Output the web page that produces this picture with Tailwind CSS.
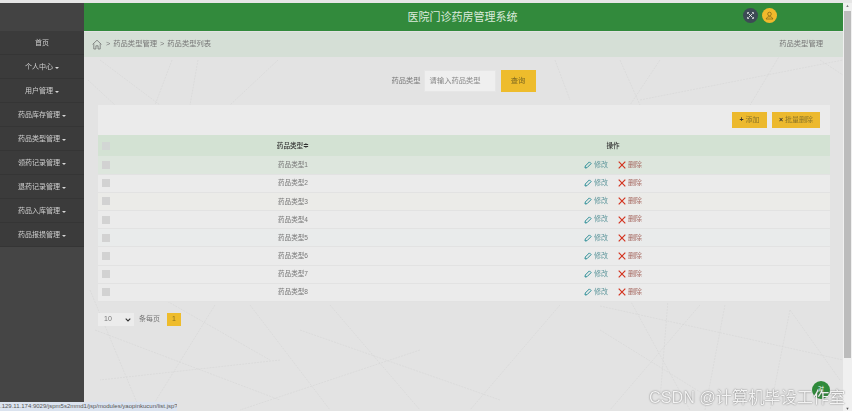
<!DOCTYPE html>
<html lang="zh-CN">
<head>
  <meta charset="UTF-8">
  <title>医院门诊药房管理系统</title>
  <script src="https://cdn.jsdelivr.net/npm/@tailwindcss/browser@4"></script>
</head>
<body class="w-[852px] h-[413px] overflow-hidden bg-white font-['Liberation_Sans','Noto_Sans_CJK_SC',sans-serif]">
  <div class="relative w-[852px] h-[413px] blur-[0.4px]">
    <div class="h-[3px] bg-[#e6e6e6]"></div>
    <div class="flex h-[408px]">
      <!-- sidebar -->
      <aside class="w-[84px] shrink-0 bg-[#454545] flex flex-col">
        <div class="h-[28px] bg-[#434343]"></div>
        <nav id="menu" class="bg-[#3b3b3b] text-[7px] text-[#cfcfcf]"></nav>
      </aside>

      <div class="flex-1 flex flex-col relative bg-[#e3e3e3]">
        <!-- background lines, in page coordinates -->
        <svg class="absolute left-0 top-0" width="759" height="408" viewBox="84 3 759 408" fill="none" stroke="#d2d2d2" stroke-width="0.5" stroke-dasharray="2 1">
          <path d="M100 60 160 105M172 60 155 105M198 60 190 105M278 60 230 105M88 80 115 105M555 60 570 100M620 60 640 105M660 60 630 105M780 55 750 105M640 100 843 60M820 60 843 75"/>
          <path d="M90 290 140 410M165 300 270 360M215 305 150 410M95 330 280 400M280 360 100 380M250 305 330 410M330 305 420 410M420 350 240 410M300 330 500 400M560 305 470 410"/>
          <path d="M600 306 843 360M630 300 690 410M600 330 705 395M700 305 610 410M668 300 660 400M725 305 705 410M790 310 770 410M790 310 840 380"/>
        </svg>

        <header class="relative h-[28px] bg-[#328a3c] flex items-center justify-center pr-[2px]">
          <h1 class="text-[11px] text-[#dcebdc]">医院门诊药房管理系统</h1>
          <div class="absolute left-[659px] top-[5px] w-[15px] h-[15px] rounded-full bg-[#3d4a55] flex items-center justify-center">
            <svg width="7" height="7" viewBox="0 0 7 7" fill="none" stroke="#fff" stroke-width="0.8"><path d="M1.5 1.5 5.5 5.5M5.5 1.5 1.5 5.5"/><path d="M.5 2V.5H2M5 .5H6.5V2M6.5 5V6.5H5M2 6.5H.5V5" stroke-width="0.7"/></svg>
          </div>
          <div class="absolute left-[678px] top-[5px] w-[15px] h-[15px] rounded-full bg-[#f0b92c] flex items-center justify-center">
            <svg width="9" height="9" viewBox="0 0 9 9" fill="none" stroke="#7a6015" stroke-width="0.7"><circle cx="4.5" cy="3" r="1.8"/><path d="M1 8h7L6.2 5.8H2.8Z"/></svg>
          </div>
        </header>

        <div class="relative h-[25px] mt-[1px] bg-[#d5dfd6] flex items-center justify-between pl-[8px] pr-[20px] text-[7.3px] text-[#777]">
          <div class="flex items-center gap-[3px]">
            <svg width="10" height="11" viewBox="0 0 10 11" fill="none" stroke="#666" stroke-width="0.7"><path d="M.6 5.4 5 1.2 9.4 5.4M1.8 4.6V10H3.9V6.8H6.1V10H8.2V4.6"/></svg>
            <span class="ml-[1px]">&gt;</span><span>药品类型管理</span><span>&gt;</span><span>药品类型列表</span>
          </div>
          <span>药品类型管理</span>
        </div>

        <main class="relative flex-1 pl-[14px] pr-[13px]">
          <form class="flex items-center justify-center h-[22px] mt-[13px] text-[7.3px] text-[#777] pr-[1px]">
            <label class="mr-[3px]">药品类型</label>
            <div class="w-[72px] h-[22px] bg-[#efefef] border border-[#e6e6e6] flex items-center pl-[5px] text-[#888]">请输入药品类型</div>
            <button type="button" class="ml-[5px] w-[35px] h-[22px] bg-[#eebc2c] text-[#7d6820]">查询</button>
          </form>

          <section class="mt-[13px] bg-[#ebebeb]">
            <div class="h-[30px] flex items-center justify-end gap-[5px] pr-[10px] text-[7px]">
              <button type="button" class="w-[35px] h-[16px] bg-[#ecb92e] text-[#8a7428]"><b class="text-[#333]">+</b> 添加</button>
              <button type="button" class="w-[48px] h-[16px] bg-[#ecb92e] text-[#8a7428]"><b class="text-[#333]">×</b> 批量删除</button>
            </div>
            <table class="w-full text-[6.6px] text-[#777] border-collapse table-fixed">
              <thead>
                <tr class="h-[21px] bg-[#d3e2d3] text-[#333]">
                  <th class="w-[92px] pl-[4px]"><span class="block w-[8px] h-[8px] bg-[#d2d6d4]"></span></th>
                  <th class="w-[206px] text-center font-medium">药品类型≑</th>
                  <th class="font-medium text-center">操作</th>
                </tr>
              </thead>
              <tbody id="rows"></tbody>
            </table>
          </section>

          <div class="flex items-center h-[15px] mt-[10px] text-[7px] text-[#777]">
            <div class="w-[36px] h-[13px] bg-[#ececec] flex items-center justify-between pl-[6px] pr-[3px]">
              <span>10</span>
              <svg width="6" height="4" viewBox="0 0 6 4" fill="none" stroke="#333" stroke-width="1.1"><path d="M.7.7 3 3 5.3.7"/></svg>
            </div>
            <span class="ml-[5px]">条每页</span>
            <span class="ml-[7px] w-[14px] h-[13px] bg-[#eebc2c] text-[#8a7020] flex items-center justify-center">1</span>
          </div>
        </main>

        <div class="absolute left-[728px] top-[378px] w-[18px] h-[18px] rounded-full bg-[#2f8a3a] flex items-center justify-center text-[6px] text-white pb-[2px]">对</div>
      </div>

      <!-- scrollbar -->
      <div class="w-[9px] shrink-0 bg-[#f0f0f0] flex flex-col">
        <div class="h-[8px] text-[4px] text-center text-[#777]">▲</div>
        <div class="h-[347px] mx-[1px] bg-[#bcbcbc]"></div>
        <div class="mt-auto h-[5px] leading-[5px] text-[4px] text-center text-[#555]">▼</div>
      </div>
    </div>
    <div class="absolute left-0 top-[402px] w-[177px] h-[9px] bg-[#dbe3ef] text-[6px] leading-[9px] text-[#555] whitespace-nowrap overflow-hidden">.129.11.174:9029/jspm5s2mmd1/jsp/modules/yaopinkucun/list.jsp?</div>
    <!-- watermark -->
    <div class="absolute left-[649px] top-[387px] text-[16.2px] leading-[20px] text-white/90 whitespace-nowrap [text-shadow:0_0_1.5px_#555]">CSDN @计算机毕设工作室</div>
  </div>

  <script>
    const menu = ["首页", "个人中心", "用户管理", "药品库存管理", "药品类型管理", "领药记录管理", "退药记录管理", "药品入库管理", "药品报损管理"];
    document.getElementById("menu").innerHTML = menu.map((name, i) =>
      `<div class="h-[24px] pt-[2px] flex items-center justify-center gap-[2px] border-b border-[#353535]">${name}${i ? '<i class="w-0 h-0 border-x-[2px] border-x-transparent border-t-[2px] border-t-[#d8d8d8]"></i>' : ""}</div>`
    ).join("");

    const rowColors = ["bg-[#dde6dd]", "bg-[#ebebeb]", "bg-[#ebebe8]", "bg-[#ebebeb]", "bg-[#e9ebeb]", "bg-[#ebebeb]", "bg-[#ebebeb]", "bg-[#ebebeb]"];
    document.getElementById("rows").innerHTML = rowColors.map((color, i) => `
      <tr class="h-[18.2px] ${color} border-b border-[#e2e2e2]">
        <td class="pl-[4px]"><span class="block w-[8px] h-[8px] bg-[#d2d2d2]"></span></td>
        <td class="text-center">药品类型${i + 1}</td>
        <td>
          <div class="flex items-center justify-center gap-[10px] text-[7px]">
            <span class="flex items-center gap-[2px] text-[#5f979c]">
              <svg width="8" height="8" viewBox="0 0 8 8" fill="none" stroke="#2a8d96" stroke-width="1"><path d="M1 7 1.3 5 5.4 .9 7.1 2.6 3 6.7Z"/></svg>修改
            </span>
            <span class="flex items-center gap-[2px] text-[#a5675f]">
              <svg width="8" height="8" viewBox="0 0 8 8" fill="none" stroke="#d3331f" stroke-width="1.2"><path d="M.7.7 7.3 7.3M7.3.7.7 7.3"/></svg>删除
            </span>
          </div>
        </td>
      </tr>`).join("");
  </script>
</body>
</html>
